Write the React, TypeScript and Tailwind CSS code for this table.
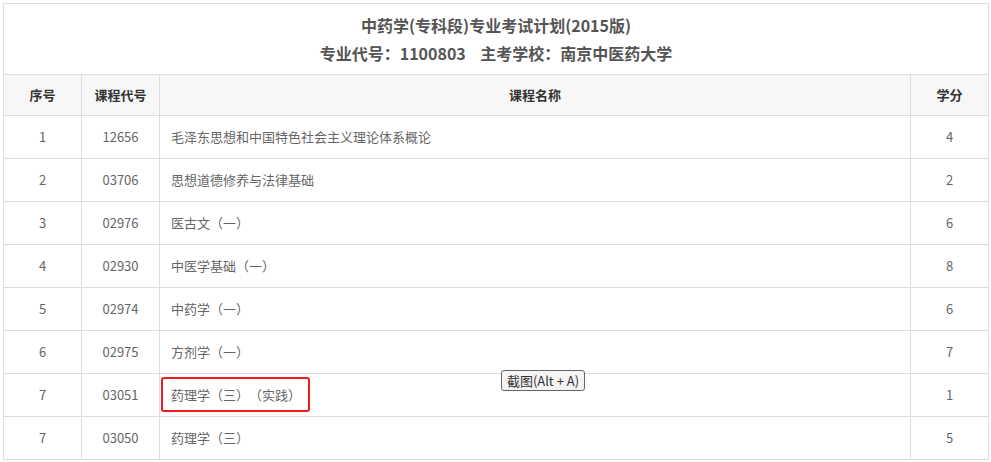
import React from "react";

type Course = { no: string; code: string; name: string; credit: string; marked?: boolean };

const courses: Course[] = [
  { no: "1", code: "12656", name: "毛泽东思想和中国特色社会主义理论体系概论", credit: "4" },
  { no: "2", code: "03706", name: "思想道德修养与法律基础", credit: "2" },
  { no: "3", code: "02976", name: "医古文（一）", credit: "6" },
  { no: "4", code: "02930", name: "中医学基础（一）", credit: "8" },
  { no: "5", code: "02974", name: "中药学（一）", credit: "6" },
  { no: "6", code: "02975", name: "方剂学（一）", credit: "7" },
  { no: "7", code: "03051", name: "药理学（三）（实践）", credit: "1", marked: true },
  { no: "7", code: "03050", name: "药理学（三）", credit: "5" },
];

const font = { fontFamily: '"Microsoft YaHei", "Noto Sans CJK SC", "Liberation Sans", sans-serif' };

export default function App() {
  return (
    <div className="relative h-[462px] w-[991px] overflow-hidden bg-white [text-spacing-trim:space-all]" style={font}>
      <div className="pl-[3px] pt-[3px]">
        <table className="w-[985px] table-fixed border-collapse text-[13px] text-[#666]">
          <colgroup>
            <col className="w-[78px]" />
            <col className="w-[78px]" />
            <col className="w-[751px]" />
            <col className="w-[78px]" />
          </colgroup>
          <thead>
            {/* title */}
            <tr>
              <th colSpan={4} className="h-[71px] border border-[#ddd] text-center align-middle font-bold text-[#555]">
                <div className="text-[16px] leading-[28px]">中药学(专科段)专业考试计划(2015版)</div>
                <div className="text-[16px] leading-[28px]">专业代号：1100803&nbsp;&nbsp;&nbsp;&nbsp;主考学校：南京中医药大学</div>
              </th>
            </tr>
            {/* column names */}
            <tr className="bg-[#f7f7f7] text-[#333]">
              <th className="h-[41px] border border-[#ddd] text-center font-bold">序号</th>
              <th className="border border-[#ddd] text-center font-bold">课程代号</th>
              <th className="border border-[#ddd] text-center font-bold">课程名称</th>
              <th className="border border-[#ddd] text-center font-bold">学分</th>
            </tr>
          </thead>
          <tbody>
            {courses.map((c, i) => (
              <tr key={i}>
                <td className="h-[43px] border border-[#ddd] text-center">{c.no}</td>
                <td className="border border-[#ddd] text-center">{c.code}</td>
                <td className="relative border border-[#ddd] pl-[11px] text-left">
                  {c.name}
                  {c.marked && (
                    <span className="absolute left-[1px] top-[3px] h-[35px] w-[149px] rounded-[3px] border-2 border-[#f21c1c]" />
                  )}
                </td>
                <td className="border border-[#ddd] text-center">{c.credit}</td>
              </tr>
            ))}
          </tbody>
        </table>
      </div>

      {/* screenshot tooltip */}
      <div className="absolute left-[501px] top-[370px] flex h-[21px] w-[84px] items-center justify-center rounded-[3px] border border-[#666] bg-[#f4f4f4] text-[13px] text-[#333]">
        截图(Alt + A)
      </div>
    </div>
  );
}
